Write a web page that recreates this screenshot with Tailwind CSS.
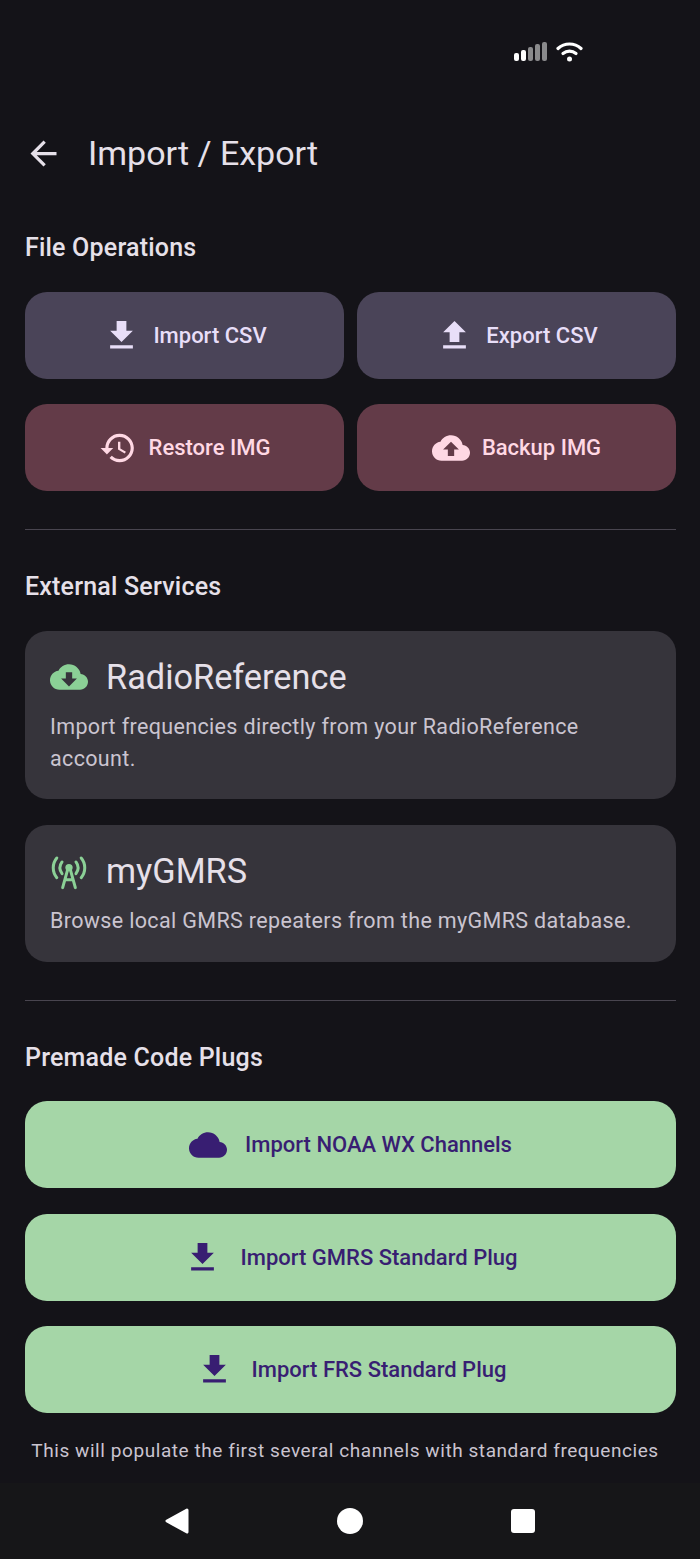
<!DOCTYPE html>
<html>
<head>
<meta charset="utf-8">
<script src="https://cdn.jsdelivr.net/npm/@tailwindcss/browser@4"></script>
</head>
<body class="m-0 bg-[#141318]">
<div class="w-[700px] h-[1559px] flex flex-col overflow-hidden bg-[#141318] font-['Roboto',sans-serif]">
  <div class="h-[105px] shrink-0 flex items-start justify-end pr-[117px] pt-[41px] gap-[9px]">
    <div class="flex items-end gap-[2px] h-[19px] mt-[1px]">
      <div class="w-[5px] h-[8px] rounded-[2px] bg-white"></div>
      <div class="w-[5px] h-[11px] rounded-[2px] bg-white"></div>
      <div class="w-[5px] h-[14px] rounded-[2px] bg-[#8a8a8c]"></div>
      <div class="w-[5px] h-[17px] rounded-[2px] bg-[#8a8a8c]"></div>
      <div class="w-[5px] h-[19px] rounded-[2px] bg-[#8a8a8c]"></div>
    </div>
    <svg class="w-[27px] h-[21px]" viewBox="0 0 27 21" fill="none" stroke="white" stroke-width="3.2" stroke-linecap="round"><path d="M2 7.500C8.500 1.500 18.500 1.500 25 7.500"/><path d="M7 12.500C10.800 9.300 16.200 9.300 20 12.500"/><circle cx="13.500" cy="18" r="2.500" fill="white" stroke="none"/></svg>
  </div>

  <main class="flex-1 min-h-0 overflow-hidden pl-[25px] pr-[24px]">
    <header class="h-[96px] flex items-center relative">
      <svg class="w-[39px] h-[39px] -ml-[1px] fill-[#e6e0e9]" viewBox="0 0 24 24"><path d="M20 11H7.830l5.590-5.590L12 4l-8 8 8 8 1.410-1.410L7.830 13H20v-2z"/></svg>
      <h1 class="ml-[25px] text-[34px] leading-[44px] font-normal text-[#e6e0e9]">Import / Export</h1>
    </header>

    <h2 class="mt-[31px] h-[32px] leading-[32px] text-[25px] font-medium tracking-[0.2px] text-[#e6e0e9]">File Operations</h2>
    <div class="mt-[28px] grid grid-cols-2 gap-x-[13px] gap-y-[25px]">
      <button class="h-[87px] rounded-[22px] bg-[#4a4458] text-[#e8def8] flex items-center justify-center gap-[12px] text-[22px] font-medium">
        <svg class="w-[39px] h-[39px] fill-current" viewBox="0 0 24 24"><path d="M5 20h14v-2H5v2zM19 9h-4V3H9v6H5l7 7 7-7z"/></svg>Import CSV
      </button>
      <button class="h-[87px] rounded-[22px] bg-[#4a4458] text-[#e8def8] flex items-center justify-center gap-[12px] text-[22px] font-medium">
        <svg class="w-[39px] h-[39px] fill-current" viewBox="0 0 24 24"><path d="M5 20h14v-2H5v2zm0-10h4v6h6v-6h4l-7-7-7 7z"/></svg>Export CSV
      </button>
      <button class="h-[87px] rounded-[22px] bg-[#633b48] text-[#ffd8e4] flex items-center justify-center gap-[12px] text-[22px] font-medium">
        <svg class="w-[38px] h-[38px] fill-current" viewBox="0 0 24 24"><path d="M13 3c-4.970 0-9 4.030-9 9H1l3.890 3.890.070.140L9 12H6c0-3.870 3.130-7 7-7s7 3.130 7 7-3.130 7-7 7c-1.930 0-3.680-.790-4.940-2.060l-1.420 1.420C8.270 19.990 10.510 21 13 21c4.970 0 9-4.030 9-9s-4.030-9-9-9zm-1 5v5l4.280 2.540.720-1.210-3.500-2.080V8H12z"/></svg>Restore IMG
      </button>
      <button class="h-[87px] rounded-[22px] bg-[#633b48] text-[#ffd8e4] flex items-center justify-center gap-[12px] text-[22px] font-medium">
        <svg class="w-[38px] h-[38px] fill-current" viewBox="0 0 24 24"><path d="M19.350 10.040C18.670 6.590 15.640 4 12 4 9.110 4 6.600 5.640 5.350 8.040 2.340 8.360 0 10.910 0 14c0 3.310 2.690 6 6 6h13c2.760 0 5-2.240 5-5 0-2.640-2.050-4.780-4.650-4.960zM14 13v4h-4v-4H7l5-5 5 5h-3z"/></svg>Backup IMG
      </button>
    </div>

    <div class="mt-[38px] h-px bg-[#49454f]"></div>

    <h2 class="mt-[41px] h-[32px] leading-[32px] text-[25px] font-medium tracking-[0.2px] text-[#e6e0e9]">External Services</h2>

    <section class="mt-[28px] h-[168px] rounded-[22px] bg-[#36343b] px-[25px] pt-[24px]">
      <div class="flex items-center gap-[18px] h-[44px]">
        <svg class="w-[38px] h-[38px] fill-[#8bd096]" viewBox="0 0 24 24"><path d="M19.350 10.040C18.670 6.590 15.640 4 12 4 9.110 4 6.600 5.640 5.350 8.040 2.340 8.360 0 10.910 0 14c0 3.310 2.690 6 6 6h13c2.760 0 5-2.240 5-5 0-2.640-2.050-4.780-4.650-4.960zM17 13l-5 5-5-5h3V9h4v4h3z"/></svg>
        <h3 class="text-[34.300px] leading-[44px] font-normal text-[#e6e0e9]">RadioReference</h3>
      </div>
      <p class="mt-[12px] text-[21.500px] leading-[31.500px] tracking-[0.35px] text-[#cac4d0]">Import frequencies directly from your RadioReference account.</p>
    </section>

    <section class="mt-[26px] h-[137px] rounded-[22px] bg-[#36343b] px-[25px] pt-[24px]">
      <div class="flex items-center gap-[18px] h-[44px]">
        <svg class="w-[38px] h-[38px]" viewBox="0 0 24 24" fill="none" stroke="#8bd096" stroke-width="1.900" stroke-linecap="round">
          <path d="M4.300 3.800C1.300 7.300 1.300 12.700 4.300 16.200"/><path d="M19.700 3.800C22.700 7.300 22.700 12.700 19.700 16.200"/>
          <path d="M7.600 6.300C5.900 8.600 5.900 11.400 7.600 13.700"/><path d="M16.400 6.300C18.100 8.600 18.100 11.400 16.400 13.700"/>
          <circle cx="12" cy="9.800" r="2.300" fill="#8bd096" stroke="none"/>
          <path d="M11.200 11L8 22.500M12.800 11L16 22.500M9.500 17.500H14.500"/>
        </svg>
        <h3 class="text-[34.300px] leading-[44px] font-normal text-[#e6e0e9]">myGMRS</h3>
      </div>
      <p class="mt-[12px] text-[21.500px] leading-[31.500px] tracking-[0.35px] whitespace-nowrap text-[#cac4d0]">Browse local GMRS repeaters from the myGMRS database.</p>
    </section>

    <div class="mt-[38px] h-px bg-[#49454f]"></div>

    <h2 class="mt-[41px] h-[32px] leading-[32px] text-[25px] font-medium tracking-[0.2px] text-[#e6e0e9]">Premade Code Plugs</h2>

    <div class="mt-[27px] flex flex-col gap-[25.500px]">
      <button class="h-[87px] rounded-[22px] bg-[#a5d6a7] text-[#381e72] flex items-center justify-center gap-[18px] text-[22px] font-medium">
        <svg class="w-[38px] h-[38px] fill-current" viewBox="0 0 24 24"><path d="M19.350 10.040C18.670 6.590 15.640 4 12 4 9.110 4 6.600 5.640 5.350 8.040 2.340 8.360 0 10.910 0 14c0 3.310 2.690 6 6 6h13c2.760 0 5-2.240 5-5 0-2.640-2.050-4.780-4.650-4.960z"/></svg>Import NOAA WX Channels
      </button>
      <button class="h-[87px] rounded-[22px] bg-[#a5d6a7] text-[#381e72] flex items-center justify-center gap-[18px] text-[22px] font-medium">
        <svg class="w-[39px] h-[39px] fill-current" viewBox="0 0 24 24"><path d="M5 20h14v-2H5v2zM19 9h-4V3H9v6H5l7 7 7-7z"/></svg>Import GMRS Standard Plug
      </button>
      <button class="h-[87px] rounded-[22px] bg-[#a5d6a7] text-[#381e72] flex items-center justify-center gap-[18px] text-[22px] font-medium">
        <svg class="w-[39px] h-[39px] fill-current" viewBox="0 0 24 24"><path d="M5 20h14v-2H5v2zM19 9h-4V3H9v6H5l7 7 7-7z"/></svg>Import FRS Standard Plug
      </button>
    </div>

    <p class="mt-[22px] pr-[11px] text-center whitespace-nowrap text-[19px] leading-[32px] tracking-[0.57px] text-[#cac4d0]">This will populate the first several channels with standard frequencies</p>
  </main>

  <nav class="h-[76px] shrink-0 bg-[#161618] flex items-center justify-center">
    <div class="w-[173px] flex justify-center">
      <svg class="w-[26px] h-[28px]" viewBox="0 0 26 28" fill="white" stroke="white" stroke-width="3" stroke-linejoin="round"><path d="M23 3L3 14l20 11z"/></svg>
    </div>
    <div class="w-[173px] flex justify-center">
      <div class="w-[26px] h-[26px] rounded-full bg-white"></div>
    </div>
    <div class="w-[173px] flex justify-center">
      <div class="w-[24px] h-[24px] rounded-[3px] bg-white"></div>
    </div>
  </nav>
</div>
</body>
</html>
